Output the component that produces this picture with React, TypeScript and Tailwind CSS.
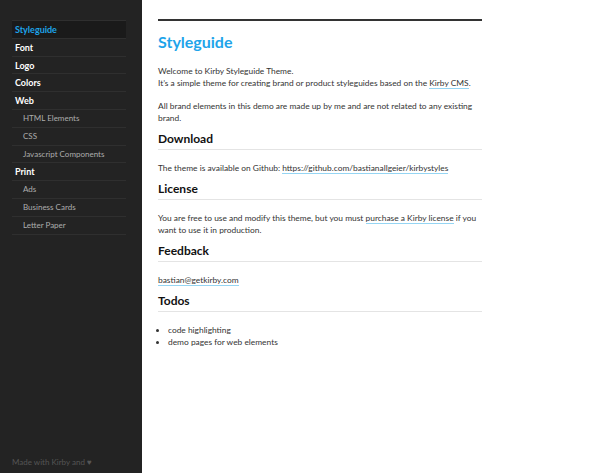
import React from 'react';

type NavItem = { label: string; sub?: boolean; active?: boolean };

const navItems: NavItem[] = [
  { label: 'Styleguide', active: true },
  { label: 'Font' },
  { label: 'Logo' },
  { label: 'Colors' },
  { label: 'Web' },
  { label: 'HTML Elements', sub: true },
  { label: 'CSS', sub: true },
  { label: 'Javascript Components', sub: true },
  { label: 'Print' },
  { label: 'Ads', sub: true },
  { label: 'Business Cards', sub: true },
  { label: 'Letter Paper', sub: true },
];

const A: React.FC<{ children: React.ReactNode }> = ({ children }) => (
  <a href="#" className="border-b border-[#95d5f3] text-[#333]">
    {children}
  </a>
);

const H2: React.FC<{ children: React.ReactNode }> = ({ children }) => (
  <h2 className="mt-[7px] border-b border-[#e4e4e4] pb-[2px] text-[12px] font-bold leading-[16px] text-[#111]">{children}</h2>
);

const App: React.FC = () => {
  return (
    <div className="flex h-[473px] w-[604px] bg-white font-['Lato',sans-serif]">
      <aside className="flex w-[142px] shrink-0 flex-col justify-between bg-[#232323] pl-[12px] pr-[16px] pt-[20px] pb-[5px]">
        <nav className="border-t border-[#2f2f2f]">
          {navItems.map((item) => (
            <a
              key={item.label}
              href="#"
              className={
                item.active
                  ? 'block h-[17.8px] border-b border-[#2f2f2f] bg-[#1a1a1a] pl-[3px] text-[9px] font-bold leading-[17px] text-[#1ea4ea]'
                  : item.sub
                    ? 'block h-[17.8px] border-b border-[#2f2f2f] pl-[11px] text-[8px] leading-[17px] text-[#adadad]'
                    : 'block h-[17.8px] border-b border-[#2f2f2f] pl-[3px] text-[9px] font-bold leading-[17px] text-white'
              }
            >
              {item.label}
            </a>
          ))}
        </nav>
        <p className="text-[8px] text-[#555]">Made with Kirby and ♥</p>
      </aside>

      <main className="w-[340px] shrink-0 pl-[16px] pt-[19px] text-[8.4px] leading-[12px] text-[#333]">
        <div className="border-t-2 border-[#333]" />
        <h1 className="mt-[11px] text-[16px] font-bold leading-[20px] text-[#1ea4ea]">Styleguide</h1>
        <p className="mt-[13px]">
          Welcome to Kirby Styleguide Theme.
          <br />
          It’s a simple theme for creating brand or product styleguides based on the <A>Kirby CMS</A>.
        </p>
        <p className="mt-[11px]">All brand elements in this demo are made up by me and are not related to any existing brand.</p>

        <H2>Download</H2>
        <p className="mt-[12px]">
          The theme is available on Github: <A>https://github.com/bastianallgeier/kirbystyles</A>
        </p>

        <H2>License</H2>
        <p className="mt-[12px]">
          You are free to use and modify this theme, but you must <A>purchase a Kirby license</A> if you want to use it in production.
        </p>

        <H2>Feedback</H2>
        <p className="mt-[12px]">
          <A>bastian@getkirby.com</A>
        </p>

        <H2>Todos</H2>
        <ul className="mt-[12px] list-disc pl-[10px]">
          <li>code highlighting</li>
          <li>demo pages for web elements</li>
        </ul>
      </main>
    </div>
  );
};

export default App;
